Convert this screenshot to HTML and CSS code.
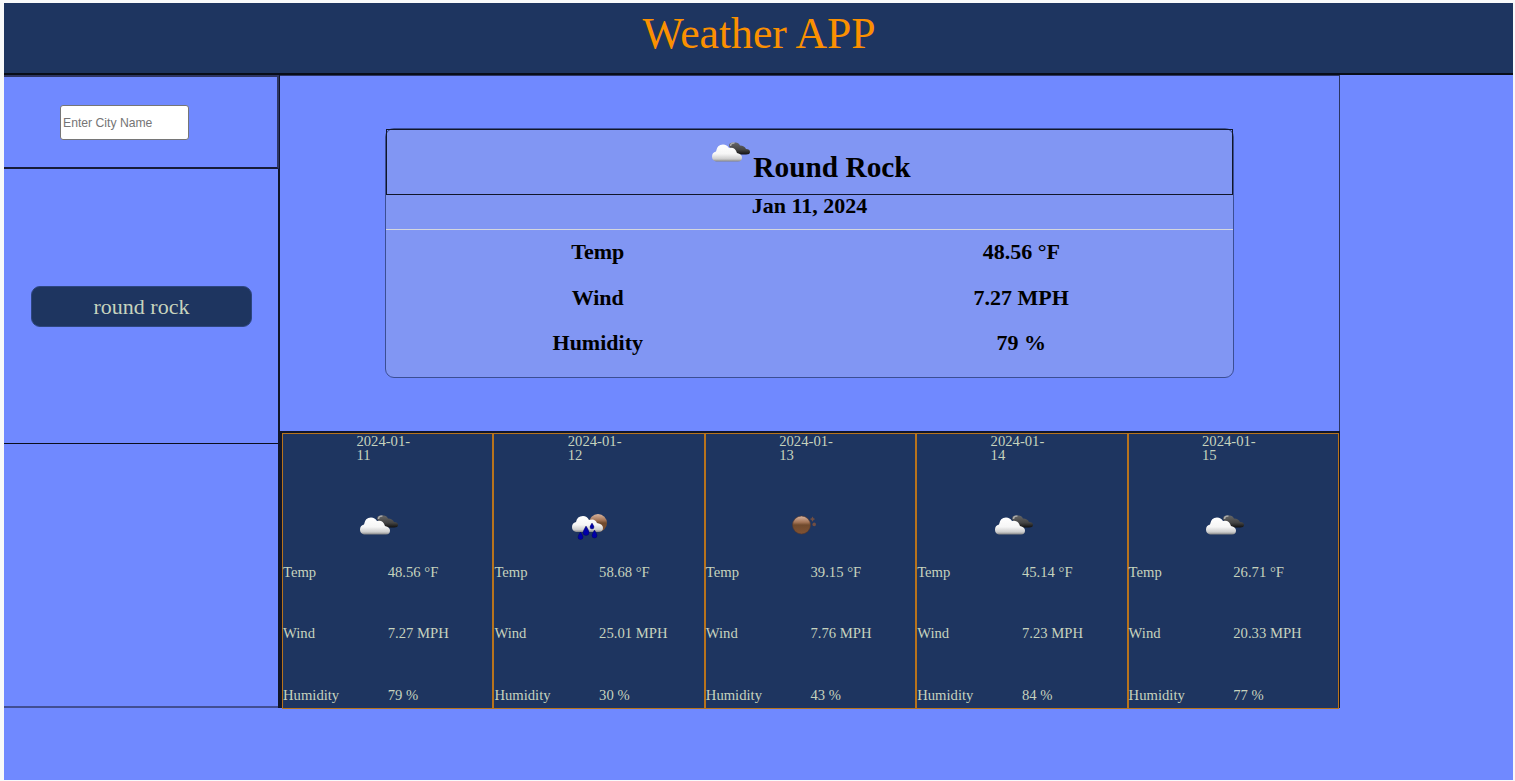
FILE: index.html
```html
<!DOCTYPE html>
<html lang="en">
<head>
<meta charset="utf-8">
<title>Weather APP</title>
<link rel="stylesheet" href="styles.css">
</head>
<body>
<svg width="0" height="0" class="defs" aria-hidden="true">
  <defs>
    <linearGradient id="white" x1="0" y1="0" x2="0" y2="1"><stop offset="0" stop-color="#fff"/><stop offset=".55" stop-color="#f6f6f6"/><stop offset=".85" stop-color="#cdcdcd"/><stop offset="1" stop-color="#858585"/></linearGradient>
    <linearGradient id="dark" x1="0" y1="0" x2="0" y2="1"><stop offset="0" stop-color="#666"/><stop offset=".6" stop-color="#444"/><stop offset="1" stop-color="#111"/></linearGradient>
    <linearGradient id="moon" x1="0" y1="0" x2="0" y2="1"><stop offset="0" stop-color="#d9b5a0"/><stop offset=".35" stop-color="#a27355"/><stop offset=".5" stop-color="#704a2d"/><stop offset="1" stop-color="#805234"/></linearGradient>
    <symbol id="clouds" viewBox="0 0 46 46">
      <path d="M22 18C22 15 24 14 27 15C29 14 32 15 33 17.500C36 17.500 38 19 39 21Q43 21 43 24Q43 26.500 39 26.500H28Z" fill="url(#dark)"/>
      <path d="M23.500 18Q23.500 14.800 27.500 15" fill="none" stroke="#aaa" stroke-width="1.6"/>
      <path d="M9 33.500A5 5 0 0 1 5 28.500Q5 24.500 9 23.500Q10 16.500 16 16.500Q20 16.500 22 20Q28 18.500 30 25Q35 26 35 29.500Q35 33.500 31 33.500Z" fill="url(#white)"/>
    </symbol>
    <symbol id="rain" viewBox="0 0 46 46">
      <circle cx="31" cy="22" r="9" fill="url(#moon)"/>
      <path d="M9 31A5 5 0 0 1 5 26Q5 22 9 21Q10 15 16 15Q20 15 22 19Q28 17 30 22Q36 23 36 27Q36 31 31 31Z" fill="url(#white)"/>
      <g fill="#0000a8" stroke="#000057" stroke-width=".4"><path d="M19 25Q22.500 30 22 31.500A3 3 0 0 1 16 31.500Q16 30 19 25Z"/><path d="M25 22Q27 25 27 26A2 2 0 0 1 23 26Q23 25 25 22ZM13.500 31Q16 34.500 16 36A2.500 2.500 0 0 1 11 36Q11 34.500 13.500 31ZM27.500 29Q30 33 30 34.500A2.500 2.500 0 0 1 25 34.500Q25 33 27.500 29Z"/></g>
    </symbol>
    <symbol id="clear" viewBox="0 0 46 46">
      <circle cx="23.500" cy="24" r="9" fill="url(#moon)" stroke="#58382a" stroke-width=".6"/>
      <g fill="#714e42"><path d="M34.500 15.500L35.500 17.200L37.200 18L35.500 18.900L34.500 20.700L33.500 18.900L31.800 18L33.500 17.200Z"/><circle cx="36.200" cy="23.400" r="1.800"/></g>
    </symbol>
  </defs>
</svg>
<div class="app">
  <header class="header"><h1>Weather APP</h1></header>
  <div class="layout">
    <aside class="sidebar">
      <div class="search"><input class="search-input" type="text" placeholder="Enter City Name"></div>
      <div class="history"><button class="city">round rock</button></div>
      <div class="spare"></div>
    </aside>
    <main class="main">
      <section class="current">
        <div class="card">
          <h2 class="card-title"><svg class="icon"><use href="#clouds"/></svg><span>Round Rock</span></h2>
          <div class="card-date">Jan 11, 2024</div>
          <div class="card-body">
            <span>Temp</span><span>48.56 °F</span>
            <span>Wind</span><span>7.27 MPH</span>
            <span>Humidity</span><span>79 %</span>
          </div>
        </div>
      </section>
      <section class="forecast">
        <article class="day"><div class="date">2024-01-11</div><svg class="icon"><use href="#clouds"/></svg><div class="stats"><span>Temp</span><span>48.56 °F</span><span>Wind</span><span>7.27 MPH</span><span>Humidity</span><span>79 %</span></div></article>
        <article class="day"><div class="date">2024-01-12</div><svg class="icon"><use href="#rain"/></svg><div class="stats"><span>Temp</span><span>58.68 °F</span><span>Wind</span><span>25.01 MPH</span><span>Humidity</span><span>30 %</span></div></article>
        <article class="day"><div class="date">2024-01-13</div><svg class="icon"><use href="#clear"/></svg><div class="stats"><span>Temp</span><span>39.15 °F</span><span>Wind</span><span>7.76 MPH</span><span>Humidity</span><span>43 %</span></div></article>
        <article class="day"><div class="date">2024-01-14</div><svg class="icon"><use href="#clouds"/></svg><div class="stats"><span>Temp</span><span>45.14 °F</span><span>Wind</span><span>7.23 MPH</span><span>Humidity</span><span>84 %</span></div></article>
        <article class="day"><div class="date">2024-01-15</div><svg class="icon"><use href="#clouds"/></svg><div class="stats"><span>Temp</span><span>26.71 °F</span><span>Wind</span><span>20.33 MPH</span><span>Humidity</span><span>77 %</span></div></article>
      </section>
    </main>
  </div>
</div>
</body>
</html>
```
FILE: styles.css
```css
* { box-sizing: border-box; }
body {
  margin: 0;
  padding: 3px 2px 1px 4px;
  height: 781px;
  overflow: hidden;
  background: #f8f9fa;
  font-family: "Liberation Serif", "Times New Roman", serif;
}
.defs { display: block; height: 0; }
.app { height: 777px; background: #7089ff; }
.header {
  height: 72px;
  background: #1e3560;
  border-bottom: 2px solid #080d18;
  text-align: center;
}
h1 {
  margin: 0;
  padding: 5px 0 0 1px;
  font-size: 43.7px;
  line-height: 50px;
  font-weight: 400;
  color: #fb9000;
}
.layout { display: flex; height: 634px; }
.sidebar {
  width: 276px;
  display: flex;
  flex-direction: column;
  border-right: 2px solid #10152a;
  height: 633px;
}
.search {
  height: 94px;
  margin-right: -1px;
  padding: 28px 0 0 56px;
  border: solid #2d3561;
  border-width: 2px 2px 2px 0;
  border-bottom-color: #171c37;
}
.search-input {
  display: block;
  width: 129px;
  height: 35px;
  padding: 1px 2px;
  border: 1px solid #767676;
  border-radius: 3px;
  background: #fff;
  font: 12.2px "Liberation Sans", Arial, sans-serif;
}
.search-input::placeholder { color: #757575; }
.history {
  height: 275px;
  padding: 116px 0 0 27px;
  border-bottom: 1px solid #0b0e1c;
}
.city {
  display: block;
  width: 221px;
  height: 41px;
  margin-top: 1px;
  padding: 0;
  border: 1px solid #2d4680;
  border-radius: 9px;
  background: #1e3560;
  color: #c6d3be;
  font: 22px "Liberation Serif", serif;
}
.spare { flex: 1; border-bottom: 2px solid #414e93; }
.main { width: 1060px; }
.current {
  height: 356px;
  padding: 53px 105px 0;
  border: 1px solid #2b3563;
  border-left: 0;
  border-bottom: 0;
}
.card {
  width: 849px;
  height: 250px;
  border: 1px solid #3b4e94;
  border-radius: 9px;
  background: #8196f3;
  font-size: 22px;
  font-weight: 700;
  margin-top: 0;
}
.current > .card { margin-top: -1px; }
.card-title {
  display: flex;
  justify-content: center;
  height: 66px;
  margin: 0;
  border: 1px solid #11162a;
  font-size: 29.33px;
  line-height: 74px;
}
.icon { display: block; flex: none; width: 46px; height: 46px; }
.card-title .icon { margin: -2px 0 0 -1px; }
.card-date {
  height: 35px;
  border-bottom: 1px solid #d5d7de;
  line-height: 22px;
  text-align: center;
}
.card-body {
  display: grid;
  grid-template-columns: 1fr 1fr;
  grid-auto-rows: 45.6px;
  line-height: 43px;
  text-align: center;
}
.forecast {
  display: grid;
  grid-template-columns: repeat(5, 1fr);
  height: 278px;
  padding: 0 1px 0 2px;
  border-top: 2px solid #10162b;
  background: linear-gradient(#10152a, #10152a) 0 0 / 100% 275px no-repeat;
}
.day {
  display: flex;
  flex-direction: column;
  height: 276px;
  border: 1px solid #b8731c;
  background: #1e3560;
  color: #c6d3be;
  font-size: 14.67px;
}
.date { width: 60px; height: 59px; margin-left: 73.4px; line-height: 14px; }
.day .icon { margin: 31px 0 0 72.4px; }
.stats {
  display: grid;
  grid-template-columns: 1fr 1fr;
  grid-auto-rows: 61.5px;
  line-height: 17px;
  padding-top: 17px;
  margin-bottom: -40px;
}
```
